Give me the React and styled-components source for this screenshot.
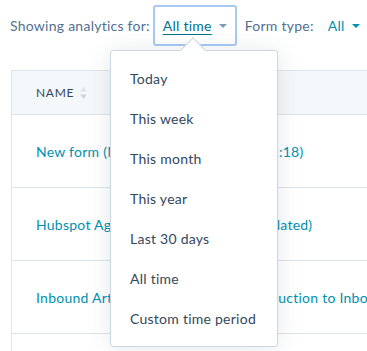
import React from "react";
import styled, { createGlobalStyle } from "styled-components";

const GlobalStyle = createGlobalStyle`
  html, body { margin: 0; padding: 0; background: #ffffff; }
  body { font-family: Lato, "Open Sans", sans-serif; color: #33475b; font-size: 14px; letter-spacing: 0.25px; overflow: hidden; }
`;

const Page = styled.div`
  position: relative;
  width: 367px;
  height: 351px;
  overflow: hidden;
`;

const Toolbar = styled.div`
  display: flex;
  align-items: center;
  height: 51px;
  padding-left: 10px;
  box-sizing: border-box;
  white-space: nowrap;
`;

const Label = styled.span`
  font-size: 14px;
  color: #516f90;
  margin-right: ${(p) => p.$gap || 0}px;
`;

const FilterButton = styled.button`
  display: flex;
  align-items: center;
  gap: 7px;
  height: 41px;
  box-sizing: border-box;
  margin: 0 8px 0 3px;
  padding: 0 8px 0 8px;
  background: #fff;
  border: 2px solid ${(p) => (p.$focused ? "#a8c8f5" : "transparent")};
  border-radius: 3px;
  font: inherit;
  letter-spacing: inherit;
  cursor: pointer;
`;

const FilterValue = styled.span`
  font-size: 14px;
  color: ${(p) => (p.$focused ? "#00718f" : "#0091ae")};
  text-decoration: ${(p) => (p.$focused ? "underline" : "none")};
  text-underline-offset: 3px;
`;

const Caret = styled.span`
  display: inline-block;
  width: 0;
  height: 0;
  border-left: 4px solid transparent;
  border-right: 4px solid transparent;
  border-top: 4px solid ${(p) => p.$color};
  margin-top: 1px;
  margin-left: ${(p) => p.$offset || 0}px;
`;

const Table = styled.div`
  margin-top: 19px;
  margin-left: 11px;
  width: 420px;
  border-left: 1px solid #dfe3eb;
  border-top: 1px solid #dfe3eb;
`;

const HeaderRow = styled.div`
  display: flex;
  align-items: center;
  height: 43px;
  padding-left: 24px;
  background: #f5f8fa;
  border-bottom: 1px solid #dfe3eb;
`;

const HeaderCell = styled.span`
  display: flex;
  align-items: center;
  gap: 6px;
  font-size: 12px;
  font-weight: 400;
  letter-spacing: 0.7px;
  color: #33475b;
`;

const SortIcon = styled.svg`
  width: 7px;
  height: 12px;
`;

const Row = styled.div`
  display: flex;
  align-items: center;
  height: 72px;
  padding-left: 24px;
  border-bottom: 1px solid #dfe3eb;
  white-space: nowrap;
`;

const FormLink = styled.a`
  font-size: 14px;
  color: #0091ae;
  text-decoration: none;
`;

const Dropdown = styled.div`
  position: absolute;
  left: 110px;
  top: 50px;
  width: 168px;
  height: 297px;
  box-sizing: border-box;
  padding: 7px 0;
  background: #fff;
  border: 1px solid #cbd6e2;
  border-radius: 3px;
  box-shadow: 0 1px 24px 0 rgba(45, 62, 80, 0.12);
  z-index: 10;
`;

const Pointer = styled.span`
  position: absolute;
  left: 73px;
  top: -10px;
  width: 17px;
  height: 17px;
  background: #fff;
  border-top: 1px solid #cbd6e2;
  border-left: 1px solid #cbd6e2;
  transform: rotate(45deg);
`;

const MenuItem = styled.div`
  display: flex;
  align-items: center;
  height: 40px;
  padding-left: 19px;
  font-size: 14px;
  color: #33475b;
  white-space: nowrap;
`;

const options = [
  "Today",
  "This week",
  "This month",
  "This year",
  "Last 30 days",
  "All time",
  "Custom time period",
];

const forms = [
  "New form (March 26th, 2019 @ 09:42:18)",
  "Hubspot Agency Partner Contact (Updated)",
  "Inbound Articles Ebook Series - Introduction to Inbound Marketing",
];

export default function App() {
  return (
    <Page>
      <GlobalStyle />
      <Toolbar>
        <Label>Showing analytics for:</Label>
        <FilterButton $focused>
          <FilterValue $focused>All time</FilterValue>
          <Caret $color="#7c98b6" />
        </FilterButton>
        <Label $gap={14}>Form type:</Label>
        <FilterValue>All</FilterValue>
        <Caret $color="#0091ae" $offset={7} />
      </Toolbar>
      <Table>
        <HeaderRow>
          <HeaderCell>
            NAME
            <SortIcon viewBox="0 0 7 12">
              <path d="M3.5 0 L7 4.5 L0 4.5 Z" fill="#dfe3eb" />
              <path d="M3.5 12 L7 7.5 L0 7.5 Z" fill="#cbd6e2" />
            </SortIcon>
          </HeaderCell>
        </HeaderRow>
        {forms.map((f) => (
          <Row key={f}>
            <FormLink href="#">{f}</FormLink>
          </Row>
        ))}
        <Row />
      </Table>
      <Dropdown>
        <Pointer />
        {options.map((o) => (
          <MenuItem key={o}>{o}</MenuItem>
        ))}
      </Dropdown>
    </Page>
  );
}
